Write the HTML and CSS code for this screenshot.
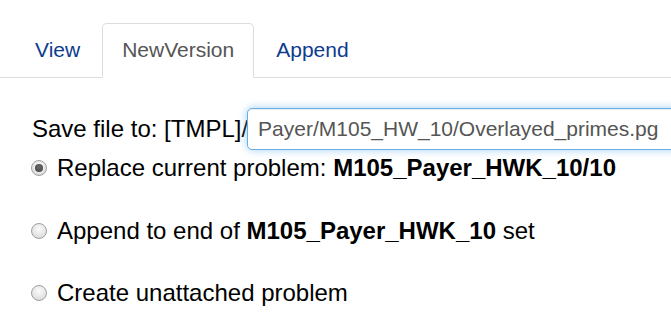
FILE: index.html
```html
<!DOCTYPE html>
<html>
<head>
<meta charset="utf-8">
<link rel="stylesheet" href="styles.css">
</head>
<body>
<ul class="tabs">
  <li class="tab"><a href="#">View</a></li>
  <li class="tab active"><a href="#">NewVersion</a></li>
  <li class="tab"><a href="#">Append</a></li>
</ul>
<form class="pane">
  <div class="save-row">
    <span class="save-label">Save file to: [TMPL]/</span>
    <input class="path-input" type="text" value="Payer/M105_HW_10/Overlayed_primes.pg">
  </div>
  <label class="option first">
    <input class="radio" type="radio" name="action" checked>
    <span>Replace current problem: <b>M105_Payer_HWK_10/10</b></span>
  </label>
  <label class="option">
    <input class="radio" type="radio" name="action">
    <span>Append to end of <b>M105_Payer_HWK_10</b> set</span>
  </label>
  <label class="option last">
    <input class="radio" type="radio" name="action">
    <span>Create unattached problem</span>
  </label>
</form>
</body>
</html>
```

FILE: styles.css
```css
html, body {
  margin: 0;
  padding: 0;
  background: #fff;
  overflow: hidden;
}

body {
  font-family: "Liberation Sans", Arial, sans-serif;
  color: #000;
}

.tabs {
  list-style: none;
  margin: 23px 0 0 0;
  padding: 0 0 0 15px;
  display: flex;
  border-bottom: 1px solid #dddddd;
}

.tab {
  margin-right: 2px;
  margin-bottom: -1px;
}

.tab a {
  display: block;
  padding: 11px 19px 12px;
  line-height: 30px;
  font-size: 21px;
  color: #0d3c8e;
  text-decoration: none;
  border: 1px solid transparent;
  border-radius: 5px 5px 0 0;
}

.tab.active a {
  color: #555555;
  background: #fff;
  border-color: #dddddd #dddddd transparent;
}

.pane {
  padding: 30px 0 0 31px;
}

.save-row {
  display: flex;
  align-items: center;
  font-size: 24px;
  line-height: 30px;
}

.save-label {
  padding-left: 1px;
  white-space: nowrap;
}

.path-input {
  flex: none;
  box-sizing: border-box;
  width: 440px;
  height: 42px;
  margin: 0 0 0 -1px;
  padding: 0 10px;
  font-family: "Liberation Sans", Arial, sans-serif;
  font-size: 21px;
  color: #555555;
  background: #fff;
  border: 1px solid #66afe9;
  border-radius: 5px;
  outline: none;
  box-shadow: inset 0 1px 1px rgba(0, 0, 0, 0.075), 0 0 8px rgba(102, 175, 233, 0.6);
}

.option {
  display: flex;
  align-items: center;
  gap: 10px;
  font-size: 24px;
  line-height: 30px;
  margin-top: 33px;
  white-space: nowrap;
}

.option.first {
  margin-top: 3px;
}

.option.last {
  margin-top: 32px;
}

.radio {
  -webkit-appearance: none;
  appearance: none;
  flex: none;
  box-sizing: border-box;
  width: 16px;
  height: 16px;
  margin: 0;
  border: 1px solid #a0a0a0;
  border-radius: 50%;
  background: radial-gradient(circle at 50% 35%, #fbfbfb 0%, #e4e4e4 60%, #d0d0d0 100%);
  position: relative;
}

.radio:checked::after {
  content: "";
  position: absolute;
  left: 3px;
  top: 3px;
  width: 8px;
  height: 8px;
  border-radius: 50%;
  background: radial-gradient(circle at 50% 40%, #6b6b6b 0%, #3f3f3f 100%);
}
```
